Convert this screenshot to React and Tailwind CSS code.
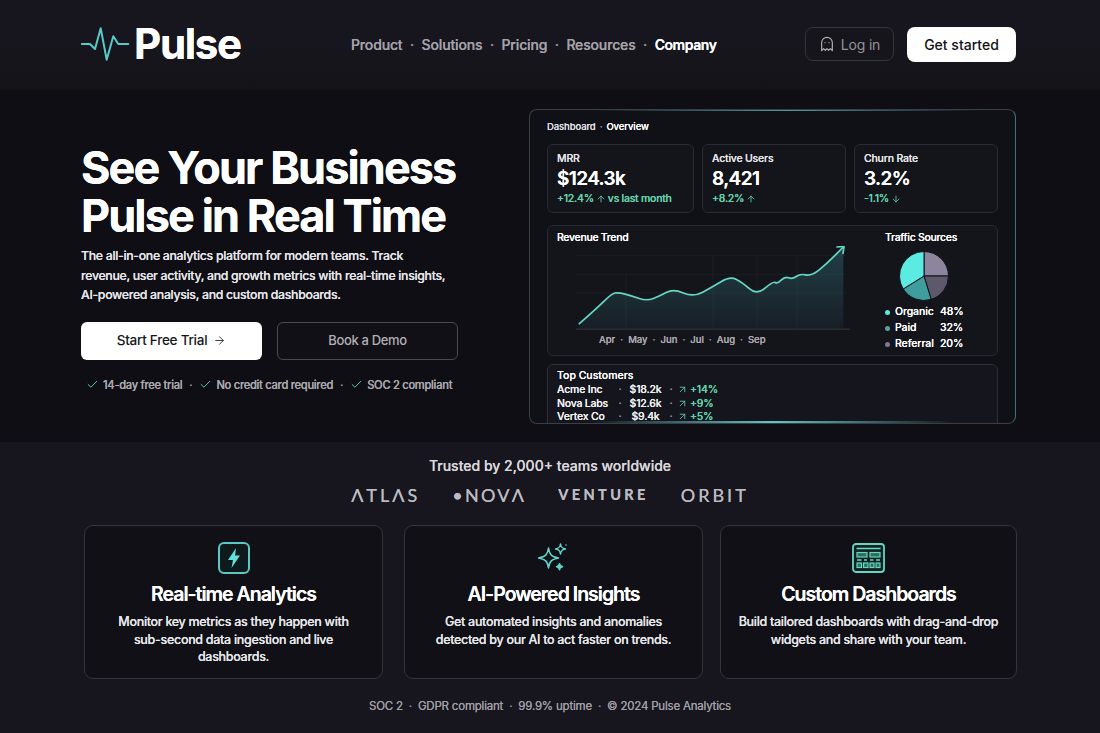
import React from 'react';
import { ArrowDown, ArrowRight, ArrowUp, ArrowUpRight, Check, Ghost } from 'lucide-react';

const trendPoints = [
    [3.3, 77.7], [20, 63], [35.7, 47.7], [42.3, 46.3], [56, 50], [70.7, 55], [84, 50], [97.3, 42.7], [117.3, 51.3],
    [136, 41], [154, 30.3], [166, 36], [180.7, 49.3], [197.3, 35], [201.3, 38], [209, 30.3], [216.3, 33.3],
    [224, 27.7], [235.7, 30], [250.7, 17.7], [267.3, 1],
];

const smoothPath = (pts) => {
    let d = `M${pts[0][0]} ${pts[0][1]}`;
    for (let i = 1; i < pts.length - 1; i++) {
        const mx = (pts[i][0] + pts[i + 1][0]) / 2;
        const my = (pts[i][1] + pts[i + 1][1]) / 2;
        d += ` Q${pts[i][0]} ${pts[i][1]} ${mx} ${my}`;
    }
    const last = pts[pts.length - 1];
    return `${d} L${last[0]} ${last[1]}`;
};

const slice = (cx, cy, r, from, to) => {
    const p = (deg) => {
        const rad = ((deg - 90) * Math.PI) / 180;
        return `${cx + r * Math.cos(rad)} ${cy + r * Math.sin(rad)}`;
    };
    return `M${cx} ${cy} L${p(from)} A${r} ${r} 0 ${to - from > 180 ? 1 : 0} 1 ${p(to)} Z`;
};

const PulseLogo = () => (
    <svg width="50" height="40" viewBox="0 0 50 40" fill="none" className="shrink-0">
        <polyline
            points="0.7,20 9,20 14,25 19.7,4.3 25.7,35.7 32.3,12.3 37.3,20 47.3,20"
            stroke="#58c9c6"
            strokeWidth="2"
            strokeLinejoin="round"
            strokeLinecap="round"
        />
    </svg>
);

const BoltIcon = () => (
    <span className="flex size-[32px] items-center justify-center rounded-[6px] border-2 border-[#5cc8c4] bg-[#0f1a1c]">
        <svg width="14" height="20" viewBox="0 0 14 20">
            <path d="M9 0 L1 12 H6 L4.500 20 L13 7.500 H8 Z" fill="#5fe0da" />
        </svg>
    </span>
);

const SparkIcon = () => (
    <svg width="32" height="32" viewBox="0 0 32 32" fill="none" stroke="#5fd5cc" strokeWidth="1.5" strokeLinejoin="round">
        <path d="M10.500 6 C11.500 12.500 13 14.500 20.500 16 C13 17.500 11.500 19.500 10.500 26 C9.500 19.500 8 17.500 0.500 16 C8 14.500 9.500 12.500 10.500 6Z" />
        <path d="M22.500 2 C23 5.500 24 6.500 27.500 7 C24 7.500 23 8.500 22.500 12 C22 8.500 21 7.500 17.500 7 C21 6.500 22 5.500 22.500 2Z" />
        <path fill="#5fd5cc" d="M21.500 21.700 C21.800 23.700 22.500 24.400 24.500 24.700 C22.500 25 21.800 25.700 21.500 27.700 C21.200 25.700 20.500 25 18.500 24.700 C20.500 24.400 21.200 23.700 21.500 21.700Z" />
        <circle cx="28" cy="3" r="0.8" fill="#5fd5cc" stroke="none" />
    </svg>
);

const GridIcon = () => (
    <svg width="33" height="30" viewBox="0 0 33 30" fill="none" stroke="#63d6bf">
        <rect x="1" y="1" width="31" height="28" rx="3" strokeWidth="1.800" fill="#12201f" />
        <path d="M4.500 5.500h24" strokeWidth="1.600" />
        <rect x="5" y="9.500" width="10" height="4.500" strokeWidth="1.200" fill="#2e6c62" />
        <rect x="18" y="9.500" width="10" height="4.500" strokeWidth="1.200" fill="#2e6c62" />
        <path d="M5 17h4.500M12 17h3M18 17h3.500M24 17h4" strokeWidth="1.400" />
        <rect x="5" y="20" width="4.500" height="4.500" strokeWidth="1.200" fill="#2e6c62" />
        <rect x="11.500" y="20" width="4.500" height="4.500" strokeWidth="1.200" fill="#2e6c62" />
        <rect x="18" y="20" width="4" height="4.500" strokeWidth="1.200" fill="#2e6c62" />
        <rect x="24" y="20" width="4" height="4.500" strokeWidth="1.200" fill="#2e6c62" />
    </svg>
);

const Dot = ({ className = '' }) => <span className={`text-[#8f8b96] ${className}`}>·</span>;

const CheckItem = ({ children }) => (
    <span className="flex shrink-0 items-center gap-[4px]">
        <Check size={13} strokeWidth={1.800} className="shrink-0 text-[#5fcfab]" />
        {children}
    </span>
);

const StatCard = ({ label, value, sub, className }) => (
    <div className={`h-[69px] rounded-[6px] border border-[#2a2a34] bg-[#14141b] pl-[9px] pt-[7px] ${className}`}>
        <div className="text-[10.500px] leading-[13px] font-medium tracking-[-0.2px] text-[#e4e4e8]">{label}</div>
        <div className="mt-[2px] text-[19px] leading-[24px] font-semibold tracking-[-0.6px] text-white">{value}</div>
        <div className="mt-[1px] flex items-center gap-[2px] text-[10.500px] leading-[14px] font-medium tracking-[-0.25px] text-[#62d2ac]">{sub}</div>
    </div>
);

const FeatureCard = ({ icon, title, children, className }) => (
    <div className={`flex h-[154px] flex-col items-center rounded-[9px] border border-[#34343e] bg-[#101016] pt-[15px] text-center ${className}`}>
        <div className="flex h-[34px] items-center justify-center">{icon}</div>
        <h3 className="mt-[6px] text-[19.500px] leading-[26px] font-semibold tracking-[-1px] text-white">{title}</h3>
        <p className="mt-[6px] text-[12.500px] leading-[17.500px] font-medium tracking-[-0.3px] text-[#e6e6ea]">{children}</p>
    </div>
);

const customers = [
    ['Acme Inc', '$18.2k', '+14%'],
    ['Nova Labs', '$12.6k', '+9%'],
    ['Vertex Co', '$9.4k', '+5%'],
];

const months = ['Apr', 'May', 'Jun', 'Jul', 'Aug', 'Sep'];

const App = () => {
    const line = smoothPath(trendPoints);
    return (
        <div className="flex h-[733px] w-[1100px] flex-col overflow-hidden bg-[#17161e] font-['Inter',sans-serif] text-white [text-shadow:0_0_0.6px_currentColor]">
            {/* top bar */}
            <header className="flex h-[90px] shrink-0 items-center bg-gradient-to-b from-[#17161e] via-[#17161e] to-[#131318] pb-[2px] pl-[81px] pr-[84px]">
                <div className="flex w-[270px] items-center">
                    <PulseLogo />
                    <span className="ml-[3px] text-[42px] leading-none font-bold tracking-[-1.300px]">Pulse</span>
                </div>
                <nav className="flex items-center gap-[7.500px] text-[14px] font-medium tracking-[-0.15px] text-[#a5a1a9]">
                    <a>Product</a><Dot />
                    <a>Solutions</a><Dot />
                    <a>Pricing</a><Dot />
                    <a>Resources</a><Dot />
                    <a className="font-semibold tracking-[-0.45px] text-white">Company</a>
                </nav>
                <div className="ml-auto flex items-center gap-[13px]">
                    <button className="flex h-[34px] w-[89px] items-center justify-center gap-[6px] rounded-[8px] border border-[#34343c] bg-[#15151b] text-[14px] tracking-[-0.2px] text-[#96929b]">
                        <Ghost size={16} strokeWidth={1.700} className="text-[#b5b3ba]" />
                        Log in
                    </button>
                    <button className="h-[35px] w-[109px] rounded-[8px] bg-white text-[14px] font-medium text-[#111116]">Get started</button>
                </div>
            </header>

            {/* hero */}
            <section className="flex h-[352px] shrink-0 bg-[#0e0e14]">
                <div className="w-[448px] shrink-0 whitespace-nowrap pl-[81px] pt-[54px]">
                    <h1 className="text-[45px] leading-[48px] font-bold tracking-[-1.900px]">
                        See Your Business<br />Pulse in Real Time
                    </h1>
                    <p className="mt-[6px] text-[12.300px] leading-[19.500px] font-medium tracking-[-0.3px] text-[#e4e4e8]">
                        The all-in-one analytics platform for modern teams. Track<br />
                        revenue, user activity, and growth metrics with real-time insights,<br />
                        AI-powered analysis, and custom dashboards.
                    </p>
                    <div className="mt-[17px] flex w-max gap-[15px]">
                        <button className="flex h-[38px] w-[181px] items-center justify-center gap-[6px] rounded-[6px] bg-white text-[13.500px] font-medium tracking-[-0.25px] text-[#15151a]">
                            Start Free Trial <ArrowRight size={13} strokeWidth={1.500} />
                        </button>
                        <button className="h-[38px] w-[181px] rounded-[6px] border border-[#4a4a52] bg-[#101016] text-[13px] font-medium tracking-[-0.35px] text-[#b3afb5]">
                            Book a Demo
                        </button>
                    </div>
                    <div className="ml-[5px] mt-[16px] flex w-max items-center gap-[7px] text-[11.200px] leading-[18px] font-medium tracking-[-0.3px] text-[#a9a7ad]">
                        <CheckItem>14-day free trial</CheckItem><Dot />
                        <CheckItem>No credit card required</CheckItem><Dot />
                        <CheckItem>SOC 2 compliant</CheckItem>
                    </div>
                </div>

                {/* dashboard mock */}
                <div className="relative ml-[81px] mt-[19px] h-[315px] w-[487px] overflow-hidden rounded-[8px] border border-[#3a3e49] border-r-[#3f7577] bg-[#101017] pl-[17px] pr-[17px] pt-[10px]">
                    <div className="absolute left-[60px] right-[30px] top-0 h-px bg-gradient-to-r from-transparent via-[#4f9a9a] to-transparent" />
                    <div className="absolute bottom-0 left-[60px] right-[60px] h-[2px] bg-gradient-to-r from-transparent via-[#62c6c2] to-transparent" />
                    <div className="flex items-center gap-[4px] text-[9.500px] leading-[14px] font-medium tracking-[-0.1px] text-[#dcdce0]">
                        <span>Dashboard</span><Dot /><span className="text-white">Overview</span>
                    </div>
                    <div className="mt-[10px] flex gap-[8px]">
                        <StatCard
                            className="w-[147px]"
                            label="MRR"
                            value="$124.3k"
                            sub={<>+12.4% <ArrowUp size={10} /> vs last month</>}
                        />
                        <StatCard
                            className="w-[144px]"
                            label="Active Users"
                            value="8,421"
                            sub={<>+8.2% <ArrowUp size={10} /></>}
                        />
                        <StatCard
                            className="w-[144px]"
                            label="Churn Rate"
                            value="3.2%"
                            sub={<>-1.1% <ArrowDown size={10} /></>}
                        />
                    </div>

                    <div className="mt-[12px] flex h-[131px] w-[451px] rounded-[6px] border border-[#2a2a34] bg-[#14141b] pl-[9px] pt-[5px]">
                        <div className="w-[328px] shrink-0">
                            <div className="text-[10.500px] leading-[14px] font-medium tracking-[-0.3px] text-white">Revenue Trend</div>
                            <svg width="280" height="86" viewBox="0 0 280 86" fill="none" className="ml-[19px] mt-[1px] block">
                                <defs>
                                    <linearGradient id="trendFill" x1="0" y1="0" x2="0" y2="1">
                                        <stop offset="0" stopColor="#2f6a72" stopOpacity="0.5" />
                                        <stop offset="1" stopColor="#2f6a72" stopOpacity="0.12" />
                                    </linearGradient>
                                </defs>
                                <path d="M0 9.300H270M0 28.300H270M0 47H270M50 28V83M137 9V83M181 9V83M221 9V83" stroke="#1d1d26" strokeWidth="1" />
                                <path d={`${line} V83.300 H3.300 Z`} fill="url(#trendFill)" />
                                <path d="M0 83.300H274" stroke="#2a2a34" strokeWidth="1.500" />
                                <path d={line} stroke="#65d8c3" strokeWidth="1.700" strokeLinecap="round" strokeLinejoin="round" />
                                <path d="M261 1 L268 0.500 L267 7.500" stroke="#65d8c3" strokeWidth="1.700" strokeLinecap="round" strokeLinejoin="round" />
                            </svg>
                            <div className="ml-[42px] mt-[1px] flex items-center gap-[5px] text-[9.500px] leading-[14px] font-medium text-[#aaa7ae]">
                                {months.map((m, i) => (
                                    <React.Fragment key={m}>
                                        {i > 0 && <Dot />}
                                        <span>{m}</span>
                                    </React.Fragment>
                                ))}
                            </div>
                        </div>
                        <div className="flex flex-col">
                            <div className="text-[10.500px] leading-[14px] font-medium tracking-[-0.3px] text-white">Traffic Sources</div>
                            <svg width="52" height="52" viewBox="0 0 52 52" className="ml-[13px] mt-[5px] block">
                                <g stroke="#101016" strokeWidth="1">
                                    <path d={slice(26, 26, 24.500, 0, 90)} fill="#8d849e" />
                                    <path d={slice(26, 26, 24.500, 90, 163)} fill="#5d596b" />
                                    <path d={slice(26, 26, 24.500, 163, 238)} fill="#3f9d9d" />
                                    <path d={slice(26, 26, 24.500, 238, 360)} fill="#5cebe3" />
                                </g>
                            </svg>
                            <div className="mt-[2px] grid grid-cols-[6px_41px_auto] items-center gap-x-[4px] text-[10.500px] leading-[16px] font-medium tracking-[-0.1px] text-white">
                                <span className="size-[5px] rounded-full bg-[#5cebe3]" /><span>Organic</span><span>48%</span>
                                <span className="size-[5px] rounded-full bg-[#5f9f9a]" /><span>Paid</span><span>32%</span>
                                <span className="size-[5px] rounded-full bg-[#7f7793]" /><span>Referral</span><span>20%</span>
                            </div>
                        </div>
                    </div>

                    <div className="mt-[8px] h-[80px] w-[451px] rounded-[6px] border border-[#2f2f39] bg-[#15151d] pl-[9px] pt-[4px]">
                        <div className="text-[10.500px] leading-[14px] font-medium text-white">Top Customers</div>
                        <div className="grid grid-cols-[60px_6px_45px_6px_auto] items-center text-[10.500px] leading-[13.500px] font-medium tracking-[-0.2px] text-[#f0f0f2]">
                            {customers.map(([name, amount, change]) => (
                                <React.Fragment key={name}>
                                    <span>{name}</span>
                                    <Dot className="text-center" />
                                    <span className="text-center">{amount}</span>
                                    <Dot className="text-center" />
                                    <span className="flex items-center gap-[2px] pl-[3px] text-[#62d2ac]">
                                        <ArrowUpRight size={11} strokeWidth={1.800} />
                                        {change}
                                    </span>
                                </React.Fragment>
                            ))}
                        </div>
                    </div>
                </div>
            </section>

            {/* logos + features */}
            <section className="flex flex-1 flex-col bg-[#17161e] pt-[14px]">
                <p className="text-center text-[14px] leading-[20px] font-medium text-[#d9d7dc]">Trusted by 2,000+ teams worldwide</p>
                <div className="mt-[9px] flex justify-center gap-[32px] font-['Lato',sans-serif] text-[18px] leading-[20px] text-[#bdbbc1]">
                    <span className="tracking-[3px]">ΛTLΛS</span>
                    <span className="tracking-[2.300px]">•NOVΛ</span>
                    <span className="text-[14.500px] font-bold tracking-[3.400px]">VENTURE</span>
                    <span className="tracking-[3px]">ORBIT</span>
                </div>
                <div className="ml-[84px] mt-[20px] flex">
                    <FeatureCard className="w-[299px]" title="Real-time Analytics" icon={<BoltIcon />}>
                        Monitor key metrics as they happen with<br />sub-second data ingestion and live<br />dashboards.
                    </FeatureCard>
                    <FeatureCard className="ml-[21px] w-[299px]" title="AI-Powered Insights" icon={<SparkIcon />}>
                        Get automated insights and anomalies<br />detected by our AI to act faster on trends.
                    </FeatureCard>
                    <FeatureCard className="ml-[17px] w-[297px]" title="Custom Dashboards" icon={<GridIcon />}>
                        Build tailored dashboards with drag-and-drop<br />widgets and share with your team.
                    </FeatureCard>
                </div>
                <footer className="mt-[18px] flex justify-center gap-[6px] text-[11.500px] leading-[18px] font-normal tracking-[-0.2px] text-[#a19fa6]">
                    <span>SOC 2</span><Dot /><span>GDPR compliant</span><Dot /><span>99.9% uptime</span><Dot /><span>© 2024 Pulse Analytics</span>
                </footer>
            </section>
        </div>
    );
};

export default App;
